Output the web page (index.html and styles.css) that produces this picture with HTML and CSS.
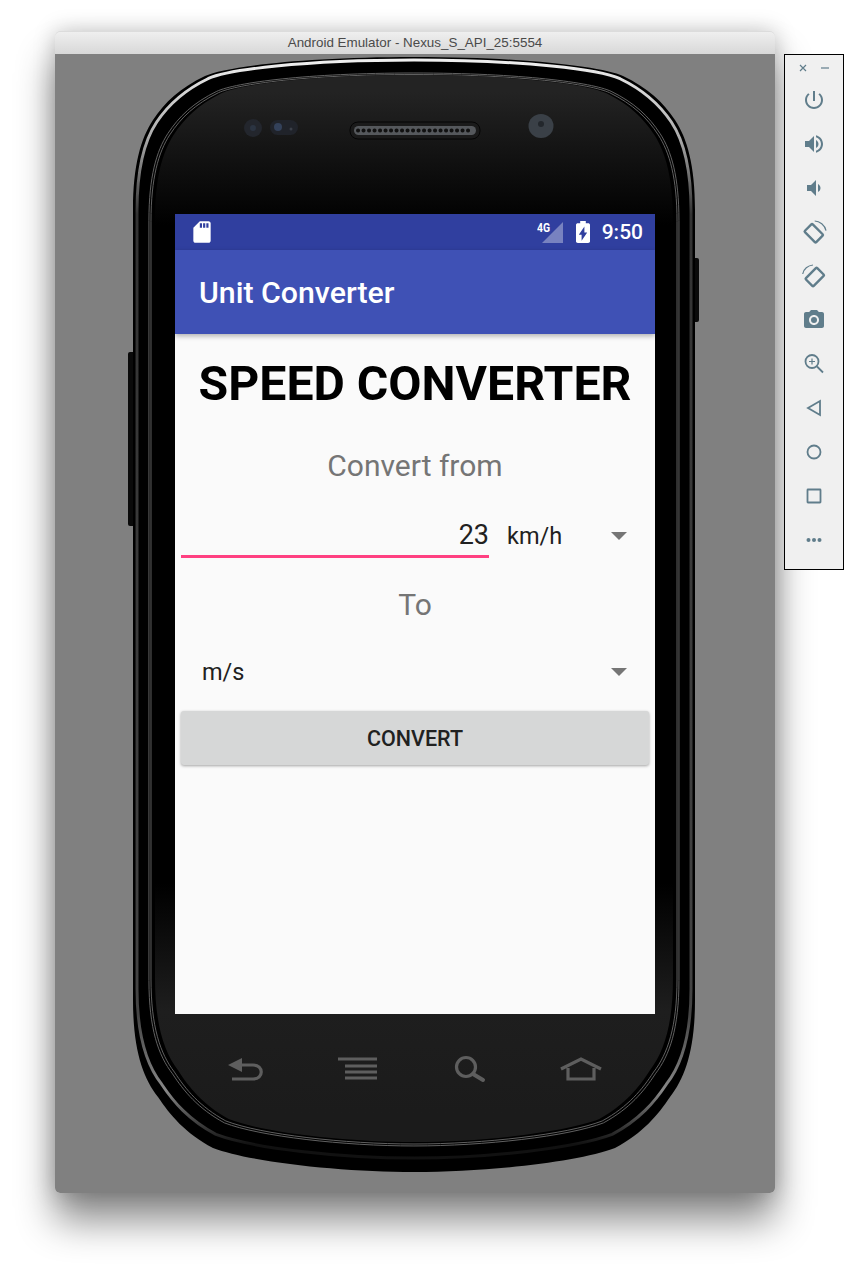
FILE: index.html
```html
<!DOCTYPE html>
<html lang="en">
  <head>
    <meta charset="UTF-8" />
    <title>Android Emulator - Nexus_S_API_25:5554</title>
    <link rel="stylesheet" href="styles.css">
  </head>
  <body>
    <div class="window">
      <div class="titlebar">Android Emulator - Nexus_S_API_25:5554</div>
      <div class="stage">
        <!-- phone body, viewBox uses page coordinates -->
        <svg class="phone" viewBox="55 54 720 1139">
          <defs>
            <path id="body" d="M133 210 C133 165 141 138 153 120 C165 102 180 88 205 76 C225 67 300 57 414 57 C528 57 603 67 623 76 C648 88 663 102 675 120 C687 138 695 165 695 210 L695 1000 C695 1050 685 1078 670 1097 C658 1115 643 1133 615 1148 C578 1162 488 1172 414 1172 C340 1172 250 1162 213 1148 C185 1133 170 1115 158 1097 C143 1078 133 1050 133 1000 Z" />
            <linearGradient id="glass" gradientUnits="userSpaceOnUse" x1="0" y1="75" x2="0" y2="1142">
              <stop offset="0" stop-color="#232323" />
              <stop offset="0.13" stop-color="#000" />
              <stop offset="0.775" stop-color="#000" />
              <stop offset="0.9" stop-color="#1e1e1e" />
              <stop offset="1" stop-color="#1b1b1b" />
            </linearGradient>
            <linearGradient id="shine" gradientUnits="userSpaceOnUse" x1="0" y1="60" x2="0" y2="1158">
              <stop offset="0" stop-color="#eee" />
              <stop offset="0.07" stop-color="#aaa" />
              <stop offset="0.14" stop-color="#333" />
              <stop offset="0.88" stop-color="#444" />
              <stop offset="0.95" stop-color="#888" />
              <stop offset="1" stop-color="#111" />
            </linearGradient>
          </defs>
          <rect x="128" y="352" width="8" height="174" rx="2" fill="#0a0a0a" />
          <rect x="692" y="258" width="7" height="64" rx="2" fill="#0a0a0a" />
          <use href="#body" fill="#000" />
          <use href="#body" class="shine" transform="matrix(.9858 0 0 .9848 5.9 3.87)" />
          <use href="#body" class="ring" transform="matrix(.9431 0 0 .9623 23.5 18.15)" />
          <use href="#body" class="ring" transform="matrix(.936 0 0 .9592 26.5 19.83)" />
          <use href="#body" fill="url(#glass)" transform="matrix(.9217 0 0 .957 32.4 20.45)" />

          <circle cx="253" cy="128" r="9" fill="#23262d" />
          <circle cx="253" cy="128" r="3" fill="#2b3442" />
          <rect x="270" y="120" width="28" height="15" rx="7.5" fill="#20232a" />
          <circle cx="278" cy="127" r="4" fill="#33415a" />
          <circle cx="291" cy="129" r="1.5" fill="#3a3f48" />
          <rect x="350" y="122" width="130" height="17" rx="8" fill="#1a1a1a" stroke="#050505" />
          <rect x="354" y="126" width="122" height="9" rx="4.5" fill="#55585c" />
          <line x1="358" y1="130.5" x2="473" y2="130.5" stroke="#111" stroke-width="4" stroke-linecap="round" stroke-dasharray="0.1 5.4" />
          <ellipse cx="541" cy="126" rx="12.5" ry="12" fill="#3a4047" />
          <circle cx="541" cy="124" r="3" fill="#23272c" />

          <g class="navkeys">
            <path d="M228 1065 L242 1058 V1072 Z" fill="#5e5e5e" stroke="none" />
            <path d="M240 1065 H253 C264 1065 264 1079 253 1079 H232" />
            <path d="M338 1059 H377 M345 1066 H377 M345 1072 H377 M345 1078 H377" />
            <circle cx="466" cy="1067" r="9.5" />
            <path d="M473 1074 L483 1080" stroke-linecap="round" stroke-width="4" />
            <path d="M561 1069 L581 1059 L601 1069 M568 1068 V1079 H594 V1068" />
          </g>
        </svg>

        <div class="screen">
          <div class="statusbar">
            <svg class="sd-icon" viewBox="0 0 24 24"><path d="M18 2h-8L4.02 8 4 20c0 1.1.9 2 2 2h12c1.100 0 2-.9 2-2V4c0-1.100-.9-2-2-2zm-6 6h-2V4h2v4zm3 0h-2V4h2v4zm3 0h-2V4h2v4z" /></svg>
            <div class="status-right">
              <div class="signal">
                <span class="net">4G</span>
                <svg class="signal-icon" viewBox="0 0 21 21"><path d="M0 21 L21 0 V21 Z" /></svg>
              </div>
              <svg class="battery-icon" viewBox="7 2 10 20" preserveAspectRatio="none"><path d="M15.670 4H14V2h-4v2H8.330C7.600 4 7 4.600 7 5.330v15.330C7 21.400 7.600 22 8.330 22h7.330c.74 0 1.340-.6 1.340-1.330V5.330C17 4.600 16.400 4 15.670 4zM11 20v-5.500H9L13 7v5.500h2L11 20z" /></svg>
              <span class="clock">9:50</span>
            </div>
          </div>
          <div class="appbar">Unit Converter</div>
          <div class="content">
            <h1 class="heading">SPEED CONVERTER</h1>
            <div class="label label-from">Convert from</div>
            <div class="from-row">
              <div class="amount">23</div>
              <div class="spinner spinner-small">
                <span>km/h</span>
                <i class="arrow"></i>
              </div>
            </div>
            <div class="label label-to">To</div>
            <div class="spinner spinner-wide">
              <span>m/s</span>
              <i class="arrow"></i>
            </div>
            <button class="convert-btn">CONVERT</button>
          </div>
        </div>
      </div>
    </div>

    <div class="toolbar">
      <div class="window-btns">
        <svg viewBox="0 0 8 8"><path d="M1 1 L7 7 M7 1 L1 7" /></svg>
        <svg viewBox="0 0 8 8"><path d="M0 4 H8" /></svg>
      </div>
      <div class="tool"><svg viewBox="0 0 24 24"><path class="solid" d="M13 3h-2v10h2V3zm4.830 2.170l-1.420 1.420C17.990 7.860 19 9.810 19 12c0 3.870-3.130 7-7 7s-7-3.130-7-7c0-2.190 1.010-4.140 2.580-5.420L6.170 5.170C4.230 6.820 3 9.260 3 12c0 4.970 4.030 9 9 9s9-4.030 9-9c0-2.740-1.230-5.180-3.170-6.830z" /></svg></div>
      <div class="tool"><svg viewBox="0 0 24 24"><path class="solid" d="M3 9v6h4l5 5V4L7 9H3zm13.500 3c0-1.770-1.020-3.290-2.500-4.030v8.050c1.480-.73 2.500-2.250 2.500-4.020zM14 3.230v2.060c2.890.86 5 3.540 5 6.710s-2.110 5.850-5 6.710v2.060c4.010-.91 7-4.490 7-8.770s-2.990-7.860-7-8.770z" /></svg></div>
      <div class="tool"><svg viewBox="0 0 24 24"><path class="solid" d="M18.500 12c0-1.770-1.020-3.290-2.500-4.030v8.050c1.480-.73 2.500-2.250 2.500-4.020zM5 9v6h4l5 5V4L9 9H5z" /></svg></div>
      <div class="tool"><svg viewBox="0 0 24 24"><rect class="line thick" x="3.800" y="7.700" width="16" height="11" rx="1" transform="rotate(45 11.800 13.200)" /><path class="line thin" d="M12.700 1 C17.500 1 23 5 24 10.700" /></svg></div>
      <div class="tool"><svg viewBox="0 0 24 24"><rect class="line thick" x="4.800" y="7.500" width="16" height="11" rx="1" transform="rotate(-45 12.800 13)" /><path class="line thin" d="M0.700 10 C1.500 5 6 1.500 11 1" /></svg></div>
      <div class="tool"><svg viewBox="0 0 24 24"><path class="solid" fill-rule="evenodd" d="M9 2L7.170 4H4c-1.100 0-2 .9-2 2v12c0 1.100.9 2 2 2h16c1.100 0 2-.9 2-2V6c0-1.100-.9-2-2-2h-3.170L15 2H9zm3 15c-2.760 0-5-2.240-5-5s2.240-5 5-5 5 2.240 5 5-2.240 5-5 5z" /><circle class="solid" cx="12" cy="12" r="3" /></svg></div>
      <div class="tool"><svg viewBox="0 0 24 24"><circle class="line" cx="10" cy="9.500" r="6.500" /><path class="line" d="M15 14.500 L21 20.500" /><path class="line thin" d="M10 6.500 V12.500 M7 9.500 H13" /></svg></div>
      <div class="tool"><svg viewBox="0 0 24 24"><path class="line" d="M18 5 V19 L6 12 Z" /></svg></div>
      <div class="tool"><svg viewBox="0 0 24 24"><circle class="line" cx="12" cy="12" r="6.500" /></svg></div>
      <div class="tool"><svg viewBox="0 0 24 24"><rect class="line" x="5.500" y="5.500" width="13" height="13" rx="0.500" /></svg></div>
      <div class="tool"><svg viewBox="0 0 24 24"><circle class="solid" cx="6.500" cy="12" r="2" /><circle class="solid" cx="12" cy="12" r="2" /><circle class="solid" cx="17.500" cy="12" r="2" /></svg></div>
    </div>
  </body>
</html>
```

FILE: styles.css
```css
html,
body {
  margin: 0;
  height: 1273px;
  overflow: hidden;
  background: #fff;
}
body {
  display: flex;
  align-items: flex-start;
  box-sizing: border-box;
  padding: 31px 0 0 55px;
  font-family: Roboto, sans-serif;
}

/* emulator window */
.window {
  width: 720px;
  height: 1162px;
  border-radius: 5px;
  box-shadow: 0 28px 38px rgba(0, 0, 0, 0.45), 0 0 22px rgba(0, 0, 0, 0.22);
  flex-shrink: 0;
}
.titlebar {
  height: 23px;
  line-height: 24px;
  text-align: center;
  font-family: "Liberation Sans", Arial, sans-serif;
  font-size: 13.4px;
  color: #4a4a4a;
  background: linear-gradient(#f0f0f0, #d8d8d8);
  border-radius: 5px 5px 0 0;
  box-shadow: inset 0 1px 0 #dcdcdc;
}
.stage {
  position: relative;
  height: 1139px;
  box-sizing: border-box;
  padding: 160px 120px 0;
  background: #808080;
  border-radius: 0 0 5px 5px;
  overflow: hidden;
}
.phone {
  position: absolute;
  left: 0;
  top: 0;
  width: 720px;
  height: 1139px;
}
.shine {
  fill: #000;
  stroke: url(#shine);
  stroke-width: 3px;
}
.ring {
  fill: none;
  stroke: #666;
  stroke-width: 1px;
}
.navkeys {
  fill: none;
  stroke: #5e5e5e;
  stroke-width: 3.2px;
}

/* android screen */
.screen {
  position: relative;
  width: 480px;
  height: 800px;
  display: flex;
  flex-direction: column;
  background: #fafafa;
}
.statusbar {
  height: 36px;
  flex-shrink: 0;
  display: flex;
  align-items: center;
  justify-content: space-between;
  padding: 0 12px 0 14px;
  background: #303f9f;
  color: #fff;
}
.sd-icon {
  width: 26px;
  height: 26px;
  fill: #fff;
}
.status-right {
  display: flex;
  align-items: center;
}
.signal {
  display: flex;
  align-items: flex-start;
}
.net {
  width: 12px;
  margin-right: -7px;
  margin-top: -1px;
  font-size: 13px;
  line-height: 14px;
  font-weight: 700;
  transform: scaleX(0.8);
  transform-origin: left;
}
.signal-icon {
  width: 21px;
  height: 21px;
  fill: rgba(255, 255, 255, 0.35);
}
.battery-icon {
  width: 14px;
  height: 22px;
  margin-left: 13px;
  fill: #fff;
}
.clock {
  margin-left: 12px;
  font-size: 21px;
  font-weight: 500;
}
.appbar {
  height: 84px;
  flex-shrink: 0;
  box-sizing: border-box;
  padding: 0 24px;
  line-height: 86px;
  font-size: 30.3px;
  font-weight: 500;
  color: #fff;
  background: #3f51b5;
  box-shadow: 0 2px 5px rgba(0, 0, 0, 0.3);
  position: relative;
}
.content {
  flex: 1;
  display: flex;
  flex-direction: column;
  padding: 0 6px;
}
.heading {
  margin: 22px 0 0;
  text-align: center;
  font-size: 48.2px;
  line-height: 56px;
  font-weight: 700;
  color: #000;
  white-space: nowrap;
}
.label {
  text-align: center;
  font-size: 30px;
  line-height: 36px;
  color: #757575;
}
.label-from {
  margin-top: 36px;
}
.label-to {
  margin-top: 15px;
}
.from-row {
  display: flex;
  margin-top: 16px;
  height: 72px;
}
.amount {
  width: 308px;
  height: 58px;
  box-sizing: border-box;
  padding: 11px 0 0 0;
  text-align: right;
  font-size: 27px;
  line-height: 48px;
  color: #212121;
  border-bottom: 3px solid #ff4081;
}
.spinner {
  display: flex;
  align-items: center;
  justify-content: space-between;
  font-size: 23.5px;
  color: #212121;
}
.spinner-small {
  flex: 1;
  height: 72px;
  padding: 0 22px 0 18px;
}
.spinner-wide {
  height: 54px;
  margin-top: 22px;
  padding: 0 22px 0 21px;
}
.arrow {
  width: 0;
  height: 0;
  border-left: 8px solid transparent;
  border-right: 8px solid transparent;
  border-top: 8px solid #757575;
}
.convert-btn {
  height: 54px;
  margin-top: 12px;
  border: 0;
  border-radius: 3px;
  font-family: Roboto, sans-serif;
  font-size: 21.5px;
  font-weight: 500;
  color: #212121;
  background: #d6d7d7;
  box-shadow: 0 1px 3px rgba(0, 0, 0, 0.35);
}

/* side toolbar */
.toolbar {
  width: 60px;
  height: 516px;
  flex-shrink: 0;
  box-sizing: border-box;
  margin: 23px 0 0 9px;
  border: 1px solid #000;
  background: #f0f0f0;
}
.window-btns {
  height: 23px;
  box-sizing: border-box;
  padding: 9px 14px 0;
  display: flex;
  justify-content: space-between;
}
.window-btns svg {
  width: 8px;
  height: 8px;
  fill: none;
  stroke: #607d8b;
  stroke-width: 1.200px;
}
.tool {
  height: 44px;
  display: flex;
  align-items: center;
  justify-content: center;
}
.tool svg {
  width: 24px;
  height: 24px;
  overflow: visible;
}
.solid {
  fill: #607d8b;
}
.line {
  fill: none;
  stroke: #607d8b;
  stroke-width: 1.800px;
}
.thick {
  stroke-width: 2.400px;
}
.thin {
  stroke-width: 1.200px;
}
```
